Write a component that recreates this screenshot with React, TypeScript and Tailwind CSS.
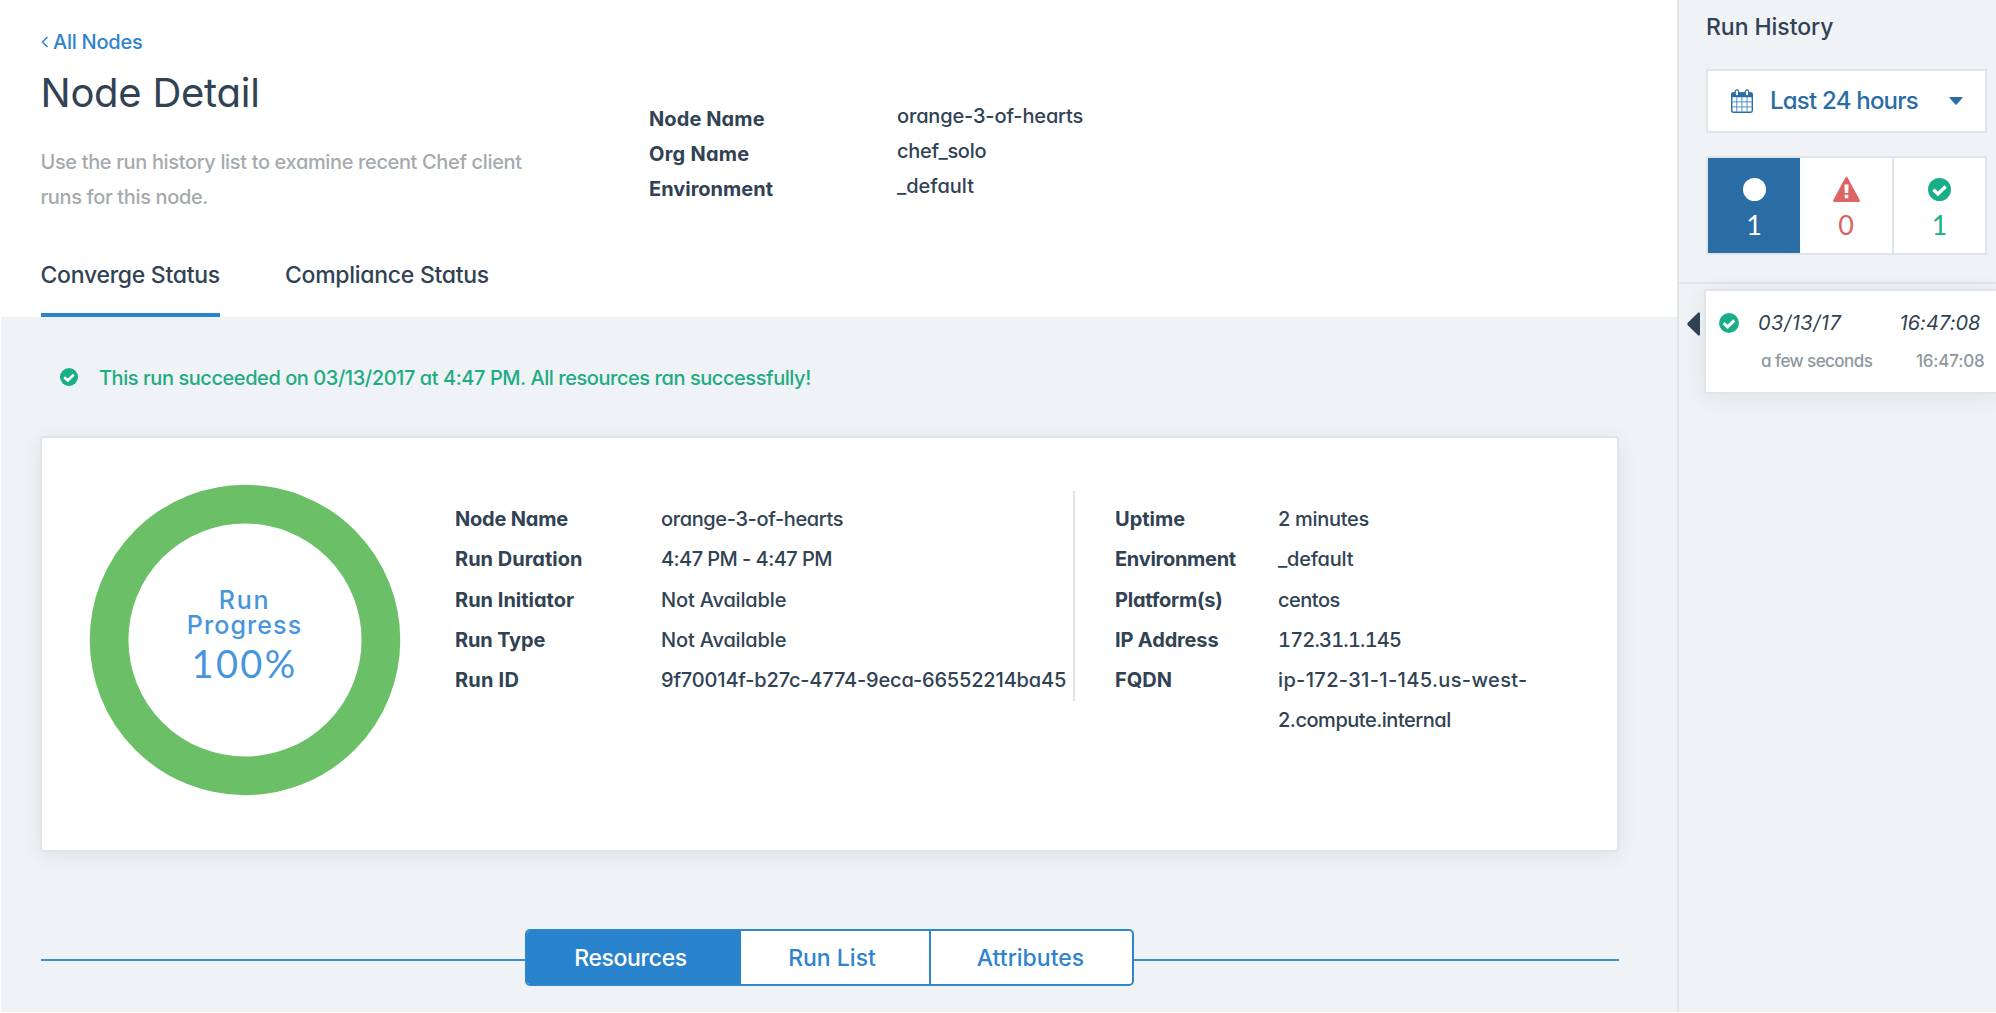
import React from "react";

type Row = { text: string; track?: string };

function CheckCircle({ className }: { className: string }) {
  return (
    <svg viewBox="0 0 24 24" className={className}>
      <circle cx="12" cy="12" r="12" fill="#1aae88" />
      <path d="M5.6 12.2 L10.4 16.6 L18.4 8.8" fill="none" stroke="#fff" strokeWidth="3.6" />
    </svg>
  );
}

function CalendarIcon() {
  return (
    <svg viewBox="0 0 22 24" className="h-6 w-[22px] shrink-0">
      <rect x="0.7" y="4" width="20.6" height="19.2" rx="1.6" fill="#fff" stroke="#2a6da5" strokeWidth="1.4" />
      <path d="M0.5 4.5 Q0.5 3.5 1.5 3.5 H20.5 Q21.5 3.5 21.5 4.5 V8.2 H0.5 Z" fill="#2a6da5" />
      <path d="M5.8 8 V23 M10.9 8 V23 M16 8 V23 M1 12.9 H21 M1 17.9 H21" stroke="#4f92c8" strokeWidth="1" />
      <rect x="4.2" y="0.9" width="3.4" height="6" rx="1.7" fill="#fff" stroke="#2a6da5" strokeWidth="1.2" />
      <rect x="14.3" y="0.9" width="3.4" height="6" rx="1.7" fill="#fff" stroke="#2a6da5" strokeWidth="1.2" />
    </svg>
  );
}

function List({ rows, className }: { rows: Row[]; className: string }) {
  return (
    <div className={className}>
      {rows.map((r, i) => (
        <div key={i} className={r.track ?? ""}>
          {r.text}
        </div>
      ))}
    </div>
  );
}

export default function App() {
  return (
    <div className="flex h-[1013px] w-[1996px] overflow-hidden bg-white font-[Inter,sans-serif] text-[20px] font-[450] text-[#304253] [font-feature-settings:'cv11']">
      <main className="flex w-[1677px] shrink-0 flex-col">
        <header className="flex h-[317px] shrink-0 pl-[40.5px]">
          <div className="w-[608.5px] shrink-0 pt-[27px]">
            <a className="flex items-center leading-[30px] tracking-[-0.25px] text-[#2f83cf]">
              <svg viewBox="0 0 8 12" className="mr-[4.5px] h-3 w-2">
                <path d="M6.5 1 L1.5 6 L6.5 11" fill="none" stroke="currentColor" strokeWidth="1.5" />
              </svg>
              <span>All Nodes</span>
            </a>
            <h1 className="mt-[11px] text-[40px] leading-[50px] font-normal tracking-[-0.25px]">Node Detail</h1>
            <p className="mt-[27px] leading-[35px] tracking-[-0.36px] whitespace-nowrap text-[#a5aaae]">
              <span>Use the run history list to examine recent Chef client</span>
              <br />
              <span>runs for this node.</span>
            </p>
            <nav className="mt-[45px] flex gap-[65px] text-[23px] leading-[30px] tracking-[-0.28px] whitespace-nowrap">
              <div className="w-[179.5px] border-b-4 border-[#2a84cd] pb-[23px]">Converge Status</div>
              <div>Compliance Status</div>
            </nav>
          </div>
          <List
            className="w-[248px] pt-[102px] leading-[35.2px] font-bold"
            rows={[
              { text: "Node Name", track: "tracking-[0.1px]" },
              { text: "Org Name", track: "tracking-[0.25px]" },
              { text: "Environment" },
            ]}
          />
          <List
            className="pt-[98.5px] leading-[35.2px]"
            rows={[
              { text: "orange-3-of-hearts", track: "tracking-[-0.15px]" },
              { text: "chef_solo", track: "tracking-[-0.3px]" },
              { text: "_default" },
            ]}
          />
        </header>

        <section className="ml-px flex h-[695px] shrink-0 flex-col bg-[#eff3f6] pl-[40px]">
          <div className="flex h-[119px] items-center pl-[19px] text-[#1fab83]">
            <CheckCircle className="mr-[21px] h-[18px] w-[18px]" />
            <span className="pt-[2px] tracking-[-0.44px] whitespace-nowrap">
              This run succeeded on 03/13/2017 at 4:47 PM. All resources ran successfully!
            </span>
          </div>

          <div className="ml-[-1px] flex h-[416px] w-[1579px] shrink-0 rounded-[4px] border-2 border-[#dfe5ea] bg-white shadow-[0_4px_20px_rgba(48,66,83,0.09)]">
            <div className="relative mt-[46px] ml-[46.5px] h-[312px] w-[312px] shrink-0">
              <svg viewBox="0 0 312 312" className="h-full w-full">
                <circle cx="156" cy="156" r="135.9" fill="none" stroke="#6bbf67" strokeWidth="38.7" />
              </svg>
              <div className="absolute inset-0 flex flex-col items-center pt-[104px] text-[25px] leading-[25px] text-[#4796dc]">
                <div className="tracking-[1.8px]">Run</div>
                <div className="tracking-[1.1px]">Progress</div>
                <div className="mt-[4px] font-[Lato,sans-serif] text-[38px] leading-[42px] font-normal tracking-[2.3px]">
                  100%
                </div>
              </div>
            </div>
            <List
              className="ml-[54.5px] w-[206px] shrink-0 pt-[61px] leading-[40.25px] font-bold"
              rows={[
                { text: "Node Name", track: "tracking-[-0.2px]" },
                { text: "Run Duration" },
                { text: "Run Initiator" },
                { text: "Run Type", track: "tracking-[-0.15px]" },
                { text: "Run ID", track: "tracking-[0.2px]" },
              ]}
            />
            <List
              className="w-[412px] shrink-0 pt-[61px] leading-[40.25px] whitespace-nowrap"
              rows={[
                { text: "orange-3-of-hearts", track: "tracking-[-0.37px]" },
                { text: "4:47 PM - 4:47 PM", track: "tracking-[-0.55px]" },
                { text: "Not Available", track: "tracking-[-0.15px]" },
                { text: "Not Available", track: "tracking-[-0.15px]" },
                { text: "9f70014f-b27c-4774-9eca-66552214ba45", track: "tracking-[-0.17px]" },
              ]}
            />
            <div className="mt-[53px] h-[210px] w-[2px] shrink-0 bg-[#dfe5ea]" />
            <List
              className="ml-[40px] w-[163px] shrink-0 pt-[61px] leading-[40.25px] font-bold"
              rows={[
                { text: "Uptime" },
                { text: "Environment", track: "tracking-[-0.28px]" },
                { text: "Platform(s)", track: "tracking-[-0.25px]" },
                { text: "IP Address", track: "tracking-[-0.15px]" },
                { text: "FQDN" },
              ]}
            />
            <List
              className="pt-[61px] leading-[40.25px] whitespace-nowrap"
              rows={[
                { text: "2 minutes", track: "tracking-[-0.3px]" },
                { text: "_default", track: "tracking-[-0.2px]" },
                { text: "centos", track: "tracking-[-0.5px]" },
                { text: "172.31.1.145", track: "tracking-[-0.8px] [font-feature-settings:'cv11','tnum']" },
                { text: "ip-172-31-1-145.us-west-", track: "tracking-[0.35px]" },
                { text: "2.compute.internal", track: "tracking-[-0.48px]" },
              ]}
            />
          </div>

          <div className="mt-[77px] flex w-[1578px] items-center text-[23px] leading-[30px] whitespace-nowrap text-[#2f83cf]">
            <div className="mt-[5px] h-[2px] w-[484px] bg-[#3d8fd1]" />
            <div className="flex h-[57px] w-[609px] overflow-hidden rounded-[5px] border-2 border-[#2f86cc] bg-white">
              <div className="flex w-[214px] items-center justify-center bg-[#2982cc] pr-[7px] tracking-[-0.35px] text-white">
                Resources
              </div>
              <div className="flex w-[190px] items-center justify-center border-r-2 border-[#2f86cc] pr-[6px]">Run List</div>
              <div className="flex flex-1 items-center justify-center pr-[2px]">Attributes</div>
            </div>
            <div className="mt-[5px] h-[2px] flex-1 bg-[#3d8fd1]" />
          </div>
        </section>
      </main>

      <aside className="flex h-[1012px] w-[319px] shrink-0 flex-col border-l-2 border-[#e2e5e8] bg-[#eff3f6]">
        <div className="flex h-[282px] shrink-0 flex-col pl-[27px]">
          <h2 className="pt-[12px] text-[23px] leading-[31px] tracking-[-0.05px]">Run History</h2>
          <div className="mt-[26px] flex h-[64px] w-[281px] items-center border-2 border-[#dfe5ea] bg-white pl-[23px] text-[24px] text-[#2a6da5]">
            <CalendarIcon />
            <span className="ml-[17px] w-[179px] leading-[30px] tracking-[-0.78px] whitespace-nowrap">Last 24 hours</span>
            <svg viewBox="0 0 14 8" className="h-2 w-[14px]">
              <path d="M1 0 H13 Q14 0 13.4 0.9 L7.6 7.5 Q7 8 6.4 7.5 L0.6 0.9 Q0 0 1 0Z" fill="#2a6da5" />
            </svg>
          </div>
          <div className="mt-[23px] flex h-[99px] w-[281px] border-2 border-[#dfe5ea] bg-white font-[Lato,sans-serif] text-[27px] leading-[34px] font-normal">
            <div className="flex w-[92px] flex-col items-center bg-[#2a6da5] pt-[20px] text-white">
              <div className="h-[23px] w-[23px] rounded-full bg-white" />
              <span className="mt-[7px]">1</span>
            </div>
            <div className="flex w-[94px] flex-col items-center border-r-2 border-[#dfe5ea] pt-[19px] text-[#dd6464]">
              <svg viewBox="0 0 27 25" className="h-[25px] w-[27px]">
                <path d="M12.3 0.8 Q13.5 -0.8 14.7 0.8 L26.7 23 Q27.4 25 25.6 25 H1.4 Q-0.4 25 0.3 23Z" fill="#dd6464" />
                <path d="M11.4 7.6 H15.6 L15.2 16 H11.8Z M11.7 17.8 H15.3 V21.3 H11.7Z" fill="#fff" />
              </svg>
              <span className="mt-[6px]">0</span>
            </div>
            <div className="flex flex-1 flex-col items-center pt-[20px] text-[#1aae88]">
              <CheckCircle className="h-[23px] w-[23px]" />
              <span className="mt-[7px]">1</span>
            </div>
          </div>
        </div>
        <div className="flex border-t-2 border-[#dfe5ea] pt-[5px] pl-[8px]">
          <svg viewBox="0 0 13 24" className="mt-[23px] mr-[4px] h-6 w-[13px] shrink-0">
            <path d="M11 0.7 Q13 -0.6 13 2 V22 Q13 24.6 11 23.3 L0.8 13.2 Q-0.2 12 0.8 10.8Z" fill="#304253" />
          </svg>
          <div className="h-[105px] w-[294px] shrink-0 border-2 border-r-0 border-[#dfe5ea] bg-white pt-[20px] pl-[13px] whitespace-nowrap shadow-[0_4px_20px_rgba(48,66,83,0.09)]">
            <div className="flex h-[24px] items-center italic">
              <CheckCircle className="mr-[19px] h-[20px] w-[20px]" />
              <span className="w-[141.5px] tracking-[0.5px]">03/13/17</span>
              <span className="tracking-[0.05px]">16:47:08</span>
            </div>
            <div className="mt-[13px] flex pl-[42px] text-[17px] leading-[26px] text-[#8f989e]">
              <span className="w-[155px] tracking-[-0.55px]">a few seconds</span>
              <span className="tracking-[-0.2px]">16:47:08</span>
            </div>
          </div>
        </div>
      </aside>
    </div>
  );
}
